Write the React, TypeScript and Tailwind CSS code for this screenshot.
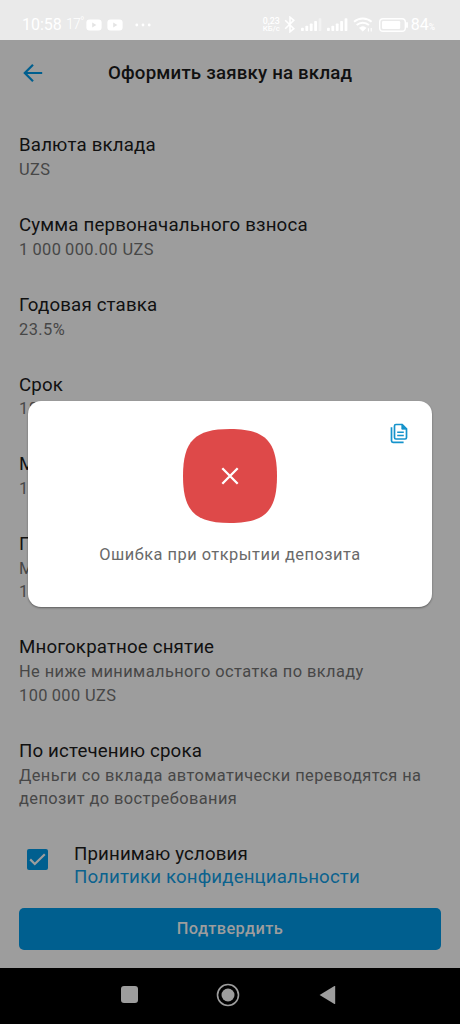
const DETAILS: { label: string; lines: string[] }[] = [
  { label: "Валюта вклада", lines: ["UZS"] },
  { label: "Сумма первоначального взноса", lines: ["1\u2009000\u2009000.00 UZS"] },
  { label: "Годовая ставка", lines: ["23.5%"] },
  { label: "Срок", lines: ["18"] },
  { label: "М", lines: ["1"] },
  { label: "П", lines: ["М", "1"] },
  { label: "Многократное снятие", lines: ["Не ниже минимального остатка по вкладу", "100\u2009000 UZS"] },
  {
    label: "По истечению срока",
    lines: ["Деньги со вклада автоматически переводятся на", "депозит до востребования"],
  },
];

function VideoIcon() {
  return (
    <svg width="16" height="12" viewBox="0 0 16 12" aria-hidden="true">
      <rect x="0.4" y="0.4" width="15.2" height="11.2" rx="3" fill="#fff" />
      <path d="M6.2 3.6v4.8l4.2-2.4z" fill="#e4e4e4" />
    </svg>
  );
}

function SignalIcon({ full }: { full?: boolean }) {
  return (
    <svg width="21" height="13" viewBox="0 0 21 13" fill="#fff" aria-hidden="true">
      <rect x="0" y="9.8" width="2.8" height="3.2" rx="0.8" />
      <rect x="4.4" y="7.8" width="2.8" height="5.2" rx="0.8" />
      <rect x="8.8" y="5.4" width="2.8" height="7.6" rx="0.8" />
      <rect x="13.2" y="3" width="2.8" height="10" rx="0.8" />
      <rect x="17.6" y="0.2" width="2.8" height="12.8" rx="0.8" opacity={full ? 1 : 0.45} />
    </svg>
  );
}

function StatusBar() {
  return (
    <div className="flex h-10 shrink-0 items-start justify-between bg-[#eaeaea] pt-[15px] pr-[25px] pl-[22px] text-white">
      <div className="flex h-[19px] items-center">
        <span className="w-[44px] text-[16px] leading-[19px] whitespace-nowrap">10:58</span>
        <span className="flex w-[20px] text-[14px] leading-[19px] font-light tracking-[-0.8px]">
          17<span className="-mt-[2px] text-[12px]">°</span>
        </span>
        <div className="flex gap-[5px]">
          <VideoIcon />
          <VideoIcon />
        </div>
        <svg className="ml-[12px]" width="16" height="4" viewBox="0 0 16 4" fill="#fff" aria-hidden="true">
          <circle cx="1.8" cy="2" r="1.4" />
          <circle cx="8" cy="2" r="1.4" />
          <circle cx="14.2" cy="2" r="1.4" />
        </svg>
      </div>
      <div className="flex h-[19px] items-center">
        <div className="flex w-[18px] flex-col text-[8.8px] leading-[8px] font-medium whitespace-nowrap">
          <span>0,23</span>
          <span className="text-[7.8px]">КБ/с</span>
        </div>
        <svg className="ml-[3px]" width="12" height="17" viewBox="0 0 12 17" fill="none" stroke="#fff" strokeWidth="1.6" aria-hidden="true">
          <path d="M1.2 4.2l8.6 8.4L6 15.8V1.2l3.8 3.2-8.6 8.4" />
        </svg>
        <div className="ml-[5px] flex gap-[5px]">
          <SignalIcon />
          <SignalIcon full />
        </div>
        <svg className="ml-[5px]" width="21" height="15" viewBox="0 0 21 15" fill="none" stroke="#fff" aria-hidden="true">
          <path d="M1 4.8a13.2 13.2 0 0 1 17.6 0" strokeWidth="1.9" />
          <path d="M3.7 8a9.2 9.2 0 0 1 12.2 0" strokeWidth="1.9" />
          <path d="M6.4 10.9a5.2 5.2 0 0 1 6.8 0L9.8 14.2z" fill="#fff" strokeWidth="0.6" />
          <path d="M15.4 14.6v-3.4M18.2 11v3.4" strokeWidth="1.1" />
        </svg>
        <svg className="ml-[5px]" width="30" height="14" viewBox="0 0 30 14" aria-hidden="true">
          <rect x="0.7" y="0.7" width="25.6" height="12.6" rx="3.4" fill="none" stroke="#fff" strokeWidth="1.4" />
          <rect x="3" y="3" width="18.2" height="8" rx="1.2" fill="#fff" />
          <path d="M28 5v4" stroke="#fff" strokeWidth="1.8" strokeLinecap="round" />
        </svg>
        <span className="ml-[2px] text-[16px] leading-[20px]">84</span>
        <span className="mt-[5px] text-[8.5px] leading-[10px] font-medium">%</span>
      </div>
    </div>
  );
}

function ErrorDialog() {
  return (
    <div
      role="alertdialog"
      className="absolute top-[401px] left-[28px] flex h-[206px] w-[404px] flex-col items-center rounded-[13px] bg-white pt-[28px] shadow-[0_1px_2px_rgba(0,0,0,0.4)]"
    >
      <button type="button" aria-label="Скопировать" className="absolute top-[22px] right-[24px]">
        <svg width="18" height="21" viewBox="0 0 18 21" fill="none" stroke="#1593cb" strokeWidth="1.7" aria-hidden="true">
          <path d="M1.5 4.2v13.6q0 1.5 1.5 1.5h10.6" />
          <path d="M5.9 1.5h6.3l4.3 4.3v8.8q0 1.4-1.4 1.4H5.9q-1.4 0-1.4-1.4V2.9q0-1.4 1.4-1.4z" />
          <path d="M11.8 1.5v4.7h4.7z" fill="#1593cb" strokeWidth="0.8" />
          <path d="M7.2 9.2h6.6M7.2 12.4h6.6" strokeWidth="1.5" />
        </svg>
      </button>
      <svg width="94" height="94" viewBox="0 0 94 94" aria-hidden="true">
        <path d="M47 0C82 0 94 12 94 47S82 94 47 94 0 82 0 47 12 0 47 0z" fill="#de4949" />
        <path d="M39.3 39.3l15.4 15.4M54.7 39.3L39.3 54.7" stroke="#fff" strokeWidth="2.3" />
      </svg>
      <p className="mt-[20px] text-[16.4px] leading-[23px] tracking-[0.5px] whitespace-nowrap text-[#6a6a6a]">
        Ошибка при открытии депозита
      </p>
    </div>
  );
}

export default function App() {
  return (
    <div className="relative flex h-[1024px] w-[460px] flex-col overflow-hidden bg-[#9d9d9d] font-['Roboto',sans-serif]">
      <StatusBar />

      <header className="flex h-[65px] shrink-0 items-center pl-[23px]">
        <svg width="20" height="18" viewBox="0 0 20 18" fill="none" stroke="#005f8f" strokeWidth="2.2" aria-hidden="true">
          <path d="M19.2 9H2M10 .8L1.8 9l8.2 8.2" />
        </svg>
        <h1 className="ml-[65px] text-[18.7px] leading-[24px] font-medium tracking-[0.18px] whitespace-nowrap text-[#111]">
          Оформить заявку на вклад
        </h1>
      </header>

      <main className="flex flex-1 flex-col px-[19px] pt-[28.2px]">
        <dl className="flex flex-col gap-[31.5px]">
          {DETAILS.map((d) => (
            <div key={d.label}>
              <dt className="text-[18.7px] leading-[24.8px] tracking-[0.16px] whitespace-nowrap text-[#111]">{d.label}</dt>
              {d.lines.map((line) => (
                <dd key={line} className="text-[16.4px] leading-[23.5px] tracking-[0.42px] whitespace-nowrap text-[#474747]">
                  {line}
                </dd>
              ))}
            </div>
          ))}
        </dl>

        <div className="mt-[32px] flex">
          <div className="mt-[6.5px] ml-[8px] flex h-[21px] w-[21px] items-center justify-center rounded-[2px] bg-[#005f8f]">
            <svg width="17" height="13" viewBox="0 0 17 13" fill="none" stroke="#9d9d9d" strokeWidth="2.2" aria-hidden="true">
              <path d="M1.2 6.4l4.6 4.6L15.8 1.2" />
            </svg>
          </div>
          <div className="ml-[26px] flex flex-col text-[18.7px] leading-[23.5px] tracking-[0.13px] whitespace-nowrap text-[#111]">
            <span>Принимаю условия</span>
            <span className="text-[#0b628e]">Политики конфиденциальности</span>
          </div>
        </div>

        <button
          type="button"
          className="mt-[18.4px] h-[42px] rounded-[5px] bg-[#005f8f] text-[16.4px] font-medium tracking-[0.38px] text-[#9d9d9d]"
        >
          Подтвердить
        </button>
      </main>

      <nav className="flex h-14 shrink-0 items-center bg-black pb-[3px] pl-[121px]">
        <span className="h-[17px] w-[17px] rounded-[3px] bg-[#9d9d9d]" />
        <svg className="ml-[78px]" width="24" height="24" viewBox="0 0 24 24" aria-hidden="true">
          <circle cx="12" cy="12" r="10.5" fill="none" stroke="#9d9d9d" strokeWidth="1.6" />
          <circle cx="12" cy="12" r="6.5" fill="#9d9d9d" />
        </svg>
        <svg className="ml-[79px]" width="17" height="20" viewBox="0 0 17 20" aria-hidden="true">
          <path d="M.6 10L15.4 1q.8-.4.8.6v16.8q0 1-.8.6z" fill="#9d9d9d" />
        </svg>
      </nav>

      <ErrorDialog />
    </div>
  );
}
